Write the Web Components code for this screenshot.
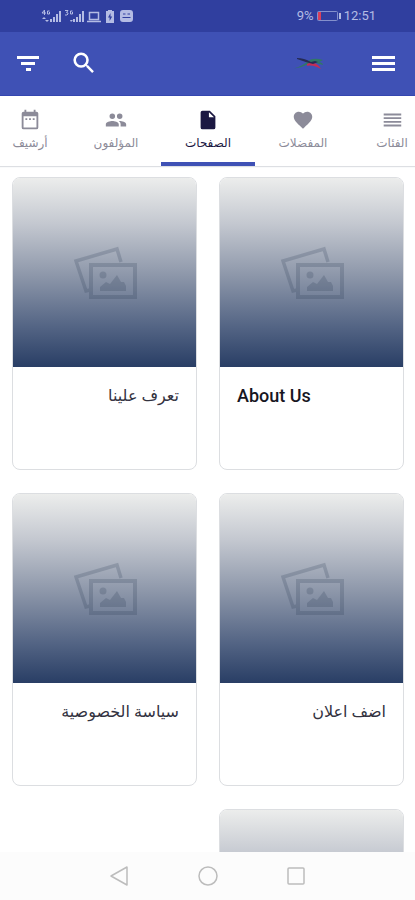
<!DOCTYPE html>
<html lang="ar" dir="rtl">
<head>
<meta charset="utf-8">
<meta name="viewport" content="width=device-width, initial-scale=1">
<title>الصفحات</title>
<style>
  body { margin: 0; background: #fff; font-family: Roboto, "DejaVu Sans", sans-serif; }
</style>
</head>
<body>
<pages-app></pages-app>
<script>
const define = (name, html, setup) => {
  const template = document.createElement('template');
  template.innerHTML = html;
  customElements.define(name, class extends HTMLElement {
    constructor() {
      super();
      this.attachShadow({ mode: 'open' }).append(template.content.cloneNode(true));
    }
    connectedCallback() { if (setup) setup(this, this.shadowRoot); }
  });
};

define('status-bar', `
<style>
  :host { display: flex; direction: ltr; justify-content: space-between; align-items: center; box-sizing: border-box; height: 32px; padding: 0 39px 0 41px; background: #303f9f; color: #b4bce4; font-size: 13px; line-height: 16px; }
  div { display: flex; align-items: center; gap: 3px; }
  svg { display: block; fill: currentColor; }
</style>
<div>
  <svg width="92" height="16" viewBox="0 0 92 16" aria-hidden="true">
    <path d="M9 14V11h2v3zM12 14V9h2v5zM15 14V6h2v8zM18 14V3h2v11z"/><path d="M1 11l2-2 2 2zM4 12h4l-2 2z"/>
    <path d="M3.500 7V2L1 5h4M8.500 3h-2v3h2v-2" fill="none" stroke="currentColor"/>
    <path d="M32 14V11h2v3zM35 14V9h2v5zM38 14V6h2v8zM41 14V3h2v11zM29 12h3l-2 2z"/>
    <path d="M24 2.500h3L25.500 4.500q2 0 1.500 1.500t-3 1M31.500 3h-2v3h2v-2" fill="none" stroke="currentColor"/>
    <path d="M48.500 4.500h9v7h-9zM46 13.500h14" fill="none" stroke="currentColor" stroke-width="1.500"/>
    <path fill-rule="evenodd" d="M67 2h4v1h2v12h-8V3h2zM69.500 5L67 9.500h1.600V13L71.200 8.500h-1.700z"/>
    <path fill-rule="evenodd" d="M82 2h7q3 0 3 3v6q0 3-3 3h-7q-3 0-3-3V5q0-3 3-3zM82 5.500v1h2.500v-1zM86.500 5.500v1H89v-1zM81.500 9v1h8V9z"/>
  </svg>
</div>
<div>
  <span>9%</span>
  <svg width="24" height="12" viewBox="0 0 24 12" aria-hidden="true">
    <rect x=".5" y="1.500" width="20" height="9" rx="1" fill="none" stroke="#8490cc"/>
    <path d="M22 3h2v6h-2z"/><path d="M1 2h3v8H1z" fill="#d8405c"/>
  </svg>
  <span>12:51</span>
</div>`);

define('app-header', `
<style>
  :host { display: flex; direction: ltr; justify-content: space-between; align-items: center; box-sizing: border-box; height: 64px; padding: 0 16px 2px 12px; background: #3f51b5; border-bottom: 1px solid #3446b0; color: #fff; }
  div { display: flex; align-items: center; }
  .start { gap: 24px; } .end { gap: 41px; }
  button { display: block; padding: 0; border: 0; width: 32px; height: 32px; background: none; color: inherit; }
  svg { display: block; margin: auto; fill: currentColor; }
</style>
<div class="start">
  <button aria-label="تصفية"><svg width="32" height="32" viewBox="0 0 32 32"><path d="M5 9h22v3H5zM9 15h14v3H9zM14 21h5v3h-5z"/></svg></button>
  <button aria-label="بحث"><svg width="28" height="28" viewBox="0 0 24 24"><circle cx="9.500" cy="9.500" r="5.500" fill="none" stroke="currentColor" stroke-width="2.200"/><path d="M15.500 14h-.79l-1.300-1.300-.7.700L14 14.710v.79l5 4.990L20.490 19z"/></svg></button>
</div>
<div class="end">
  <svg width="34" height="16" viewBox="0 0 32 16" role="img" aria-label="شعار">
    <path d="M1 13.500Q10 11 15 6q5-4 15-1l-4 2q4 1 4 3l-7-2q-6-1-10 2-5 3-12 3.500z" fill="#317766"/>
    <path d="M14 9q4-2 7-1 4 1 7 6-4-2.500-8-3.200-3-.8-6 0z" fill="#c42d55"/>
    <path d="M4 3q7 0 14 4l4-1 3 1-5 2q-8-2-16-5z" fill="#252b55"/>
  </svg>
  <button aria-label="القائمة"><svg width="32" height="32" viewBox="0 0 32 32"><path d="M5 9h23v3H5zM5 15h23v3H5zM5 21h23v3H5z"/></svg></button>
</div>`);

const tabIcons = {
  list: '<path d="M3 5h19v2H3zM3 9h19v2H3zM3 13h19v2H3zM3 17h19v2H3z"/>',
  heart: '<path d="M12 21.350l-1.450-1.320C5.400 15.360 2 12.280 2 8.500 2 5.420 4.420 3 7.500 3c1.740 0 3.410.81 4.500 2.090C13.090 3.810 14.760 3 16.500 3 19.580 3 22 5.420 22 8.500c0 3.780-3.400 6.860-8.550 11.540z"/>',
  page: '<path d="M6 2h8l6 6v12q0 2-2 2H6q-2 0-2-2V4q0-2 2-2zM13 3.500V9h5.500z"/>',
  people: '<path d="M16 11a3 3 0 1 0 0-6 3 3 0 0 0 0 6zM8 11a3 3 0 1 0 0-6 3 3 0 0 0 0 6zM8 13c-2.330 0-7 1.170-7 3.500V19h14v-2.500C15 14.170 10.330 13 8 13zM16 13l-1 .05c1.160.84 2 1.970 2 3.450V19h6v-2.500c0-2.330-4.670-3.500-7-3.500z"/>',
  date: '<path fill-rule="evenodd" d="M19 3h-1V1h-2v2H8V1H6v2H5q-2 0-2 2v15q0 2 2 2h14q2 0 2-2V5q0-2-2-2zM5 8h14v12H5zM7 10h2v2H7zM11 10h2v2h-2zM15 10h2v2h-2z"/>'
};

define('nav-tab', `
<style>
  :host { display: block; color: #8c8b99; }
  :host([active]) { color: #1b1842; }
  button { display: flex; flex-direction: column; align-items: center; gap: 2px; box-sizing: border-box; width: 100%; height: 70px; padding: 12px 0 0; border: 0; border-bottom: 4px solid transparent; background: none; color: inherit; font-family: inherit; font-size: 12px; line-height: 18px; white-space: nowrap; }
  :host([active]) button { border-bottom-color: #3f51b5; }
  svg { display: block; fill: currentColor; }
</style>
<button role="tab"><svg width="24" height="24" viewBox="-1 -1 26 26" aria-hidden="true"></svg><slot></slot></button>`,
(host, root) => {
  root.querySelector('svg').innerHTML = tabIcons[host.getAttribute('icon')];
  root.querySelector('button').setAttribute('aria-selected', host.hasAttribute('active'));
});

define('tab-strip', `
<style>
  :host { display: block; overflow: hidden; background: #fff; box-shadow: 0 1px 1px #dddfe3; position: relative; }
  div { display: grid; grid-template-columns: 82fr 96fr 94fr 90fr 82fr; margin-inline: -18px -11px; }
</style>
<div role="tablist" aria-label="الأقسام"><slot></slot></div>`);

define('page-card', `
<style>
  :host { display: block; box-sizing: border-box; min-height: 293px; overflow: hidden; border: 1px solid #dcdee1; border-radius: 8px; background: #fff; }
  .cover { display: grid; place-items: center; height: 189px; background: linear-gradient(#ecedec 0%, #c4c8d0 24%, #8c96a9 52%, #536484 79%, #293e65 100%); }
  svg { display: block; fill: none; stroke: #25364f; opacity: .2; }
  h2 { margin: 0; padding: 16px 17px; font-size: 16px; font-weight: 400; line-height: 26px; color: #33323f; text-align: start; }
  :host([dir=ltr]) h2 { font-size: 18px; font-weight: 500; color: #17161f; }
</style>
<div class="cover"><svg width="66" height="56" viewBox="0 0 66 56" aria-hidden="true">
  <path d="M49 17L45 4 4 16l10 30 4-1" stroke-width="3.500"/>
  <rect x="19" y="20" width="44" height="32" stroke-width="4"/>
  <circle cx="31" cy="30" r="3.500" fill="#25364f" stroke="none"/>
  <path d="M28 46v-4l6-5 4 2 7-9 4 7h3l2 4v5z" fill="#25364f" stroke="none"/>
</svg></div>
<h2><slot></slot></h2>`);

define('system-nav', `
<style>
  :host { display: flex; direction: ltr; justify-content: center; align-items: center; gap: 64px; height: 48px; background: #fcfcfc; }
  button { display: block; width: 24px; height: 24px; padding: 0; border: 0; background: none; }
  svg { display: block; fill: none; stroke: #bcbcbc; stroke-width: 1.500; stroke-linejoin: round; }
</style>
<button aria-label="رجوع"><svg width="24" height="24" viewBox="0 0 24 24"><path d="M19 3v18L3 12z"/></svg></button>
<button aria-label="الرئيسية"><svg width="24" height="24" viewBox="0 0 24 24"><circle cx="12" cy="12" r="9"/></svg></button>
<button aria-label="التطبيقات الأخيرة"><svg width="24" height="24" viewBox="0 0 24 24"><rect x="4" y="4" width="16" height="16" rx="1"/></svg></button>`);

define('pages-app', `
<style>
  :host { display: flex; flex-direction: column; height: 100vh; }
  status-bar, app-header, tab-strip, system-nav { flex: none; }
  main { flex: 1; min-height: 0; overflow: auto; scrollbar-width: none; }
  .grid { display: grid; grid-template-columns: 1fr 1fr; gap: 23px 22px; padding: 11px 11px 24px 12px; }
</style>
<status-bar></status-bar>
<app-header></app-header>
<tab-strip>
  <nav-tab icon="list">الفئات</nav-tab>
  <nav-tab icon="heart">المفضلات</nav-tab>
  <nav-tab icon="page" active>الصفحات</nav-tab>
  <nav-tab icon="people">المؤلفون</nav-tab>
  <nav-tab icon="date">أرشيف</nav-tab>
</tab-strip>
<main><div class="grid">
  <page-card dir="ltr">About Us</page-card>
  <page-card>تعرف علينا</page-card>
  <page-card>اضف اعلان</page-card>
  <page-card>سياسة الخصوصية</page-card>
  <page-card></page-card>
</div></main>
<system-nav></system-nav>`);
</script>
</body>
</html>
